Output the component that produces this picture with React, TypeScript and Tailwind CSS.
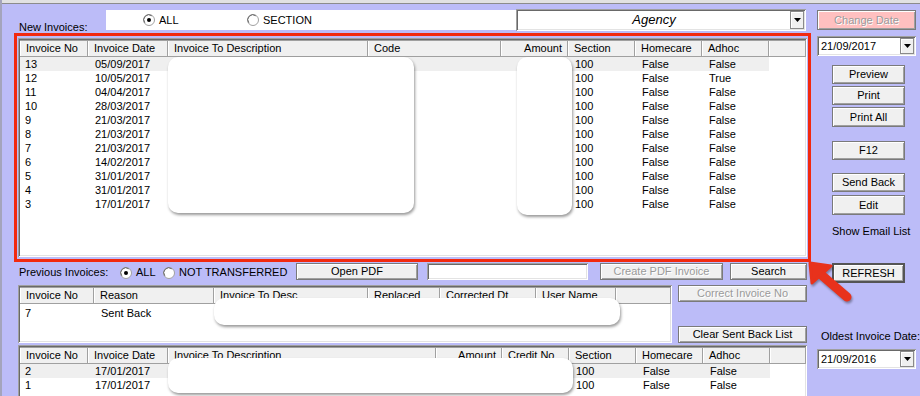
import React from "react";

type Col = { label: string; w: string; right?: boolean };

const sunken =
  "shadow-[inset_1px_1px_0_#a0a0a0,inset_-1px_-1px_0_#ffffff,inset_2px_2px_0_#696969,inset_-2px_-2px_0_#e3e3e3]";

const newCols: Col[] = [
  { label: "Invoice No", w: "w-[68px]" },
  { label: "Invoice Date", w: "w-[80px]" },
  { label: "Invoice To Description", w: "w-[200px]" },
  { label: "Code", w: "w-[133px]" },
  { label: "Amount", w: "w-[67px]", right: true },
  { label: "Section", w: "w-[67px]" },
  { label: "Homecare", w: "w-[67px]" },
  { label: "Adhoc", w: "w-[67px]" },
];

const sentCols: Col[] = [
  { label: "Invoice No", w: "w-[74px]" },
  { label: "Reason", w: "w-[120px]" },
  { label: "Invoice To Desc", w: "w-[154px]" },
  { label: "Replaced", w: "w-[72px]" },
  { label: "Corrected Dt", w: "w-[96px]" },
  { label: "User Name", w: "w-[80px]" },
];

const prevCols: Col[] = [
  { label: "Invoice No", w: "w-[68px]" },
  { label: "Invoice Date", w: "w-[80px]" },
  { label: "Invoice To Description", w: "w-[268px]" },
  { label: "Amount", w: "w-[66px]", right: true },
  { label: "Credit No", w: "w-[67px]" },
  { label: "Section", w: "w-[67px]" },
  { label: "Homecare", w: "w-[67px]" },
  { label: "Adhoc", w: "w-[67px]" },
];

const newRows = [
  ["13", "05/09/2017", "False"],
  ["12", "10/05/2017", "True"],
  ["11", "04/04/2017", "False"],
  ["10", "28/03/2017", "False"],
  ["9", "21/03/2017", "False"],
  ["8", "21/03/2017", "False"],
  ["7", "21/03/2017", "False"],
  ["6", "14/02/2017", "False"],
  ["5", "31/01/2017", "False"],
  ["4", "31/01/2017", "False"],
  ["3", "17/01/2017", "False"],
].map(([no, date, adhoc]) => [no, date, "", "", "", "100", "False", adhoc]);

const prevRows = [
  ["2", "17/01/2017", "", "", "", "100", "False", "False"],
  ["1", "17/01/2017", "", "", "", "100", "False", "False"],
];

function Btn({
  children,
  className = "",
  disabled = false,
  pink = false,
  main = false,
}: {
  children: React.ReactNode;
  className?: string;
  disabled?: boolean;
  pink?: boolean;
  main?: boolean;
}) {
  return (
    <div
      className={`flex flex-none items-center justify-center whitespace-nowrap leading-none shadow-[inset_1px_1px_0_#ffffff,inset_-1px_-1px_0_#a0a0a0] ${
        main ? "border-2 border-[#555555]" : "border border-[#7a7a7a]"
      } ${pink ? "bg-[#ffc0c0]" : "bg-[#f0f0f0]"} ${
        disabled ? "text-[#9a9a9a] [text-shadow:1px_1px_0_#ffffff]" : "text-black"
      } ${className}`}
    >
      {children}
    </div>
  );
}

function Radio({ label, checked = false, className = "" }: { label: string; checked?: boolean; className?: string }) {
  return (
    <div className={`flex flex-none items-center gap-[4px] leading-[13px] ${className}`}>
      <svg width="12" height="12" viewBox="0 0 12 12" className="flex-none">
        <circle cx="6" cy="6" r="5.5" fill="#ffffff" stroke="#a0a0a0" />
        <path d="M1.8 8.8 A5 5 0 0 1 8.8 1.8" fill="none" stroke="#696969" strokeWidth="1" />
        {checked && <circle cx="6" cy="6" r="2" fill="#000000" />}
      </svg>
      <span>{label}</span>
    </div>
  );
}

function DropBtn() {
  return (
    <div className="flex w-[14px] flex-none items-center justify-center border border-[#8a8a8a] bg-[#f0f0f0] shadow-[inset_1px_1px_0_#ffffff]">
      <svg width="7" height="4" viewBox="0 0 7 4">
        <path d="M0 0h7L3.5 4z" fill="#000000" />
      </svg>
    </div>
  );
}

function Combo({ value, className = "", center = false }: { value: string; className?: string; center?: boolean }) {
  return (
    <div className={`flex flex-none bg-white p-[2px] ${sunken} ${className}`}>
      <div
        className={`flex flex-1 items-center ${
          center ? "justify-center text-[13px] italic" : "pl-[2px] text-[11px]"
        }`}
      >
        {value}
      </div>
      <DropBtn />
    </div>
  );
}

function Grid({
  cols,
  rows,
  tail,
  className = "",
  rowClass = "h-[14px] leading-[14px]",
  hilite = true,
  children,
}: {
  cols: Col[];
  rows: string[][];
  tail: string;
  className?: string;
  rowClass?: string;
  hilite?: boolean;
  children?: React.ReactNode;
}) {
  return (
    <div className={`relative flex-none overflow-hidden bg-white p-[2px] ${sunken} ${className}`}>
      <div className="flex h-[17px]">
        {cols.map((c) => (
          <div
            key={c.label}
            className={`${c.w} flex-none truncate border-y border-r border-[#a0a0a0] bg-[#f0f0f0] leading-[15px] shadow-[inset_1px_0_0_#ffffff] ${
              c.right ? "pr-[5px] text-right" : "pl-[6px]"
            }`}
          >
            {c.label}
          </div>
        ))}
        <div className={`${tail} flex-none border-y border-r border-[#a0a0a0] bg-[#f0f0f0] shadow-[inset_1px_0_0_#ffffff]`} />
      </div>
      {rows.map((r, i) => (
        <div key={i} className={`flex w-fit ${rowClass} ${hilite && i === 0 ? "bg-[#efefef]" : ""}`}>
          {cols.map((c, j) => (
            <div
              key={j}
              className={`${c.w} flex-none truncate ${
                c.right ? "pr-[5px] text-right" : j === 0 ? "pl-[5px]" : "pl-[7px]"
              }`}
            >
              {r[j]}
            </div>
          ))}
        </div>
      ))}
      {children}
    </div>
  );
}

// white blur-out boxes laid over the grids
function Redact({ className }: { className: string }) {
  return <div className={`absolute rounded-[10px] bg-white shadow-[1px_2px_3px_rgba(0,0,0,0.4)] ${className}`} />;
}

function Arrow() {
  return (
    <svg
      width="920"
      height="396"
      className="pointer-events-none absolute left-0 top-0 drop-shadow-[1px_2px_1px_rgba(0,0,0,0.35)]"
    >
      <line x1="816" y1="272" x2="845" y2="297" stroke="#e8321c" strokeWidth="9" strokeLinecap="round" />
      <path d="M808 263 L810 283 L829 266 Z" fill="#e8321c" stroke="#e8321c" strokeWidth="3" strokeLinejoin="round" />
    </svg>
  );
}

export default function App() {
  return (
    <div className="relative h-[396px] w-[920px] overflow-hidden border-l-2 border-[#a4a4bc] bg-[#bcbcf8] font-['Liberation_Sans',Arial,sans-serif] text-[11px] text-black">
      <div className="h-[4px] border-b border-[#8c8c8c] bg-[#e2e2e2]" />
      <div className="flex">
        <div className="ml-[12px] w-[797px] flex-none">
          <div className="mt-[5px] flex h-[22px]">
            <div className="ml-[5px] w-[87px] flex-none pt-[12px] leading-[13px]">New Invoices:</div>
            <div className="mt-[1px] flex h-[20px] w-[410px] flex-none items-center bg-white pl-[37px]">
              <Radio checked label="ALL" className="w-[104px]" />
              <Radio label="SECTION" />
            </div>
            <Combo value="Agency" center className="h-[22px] w-[290px]" />
          </div>

          <div className="mt-[2px] h-[229px] border-[3px] border-[#f2290f] pl-[1px] pt-[2px]">
            <Grid cols={newCols} rows={newRows} tail="w-[37px]" className="h-[219px] w-[789px]">
              <Redact className="left-[150px] top-[19px] h-[156px] w-[246px]" />
              <Redact className="left-[499px] top-[19px] h-[158px] w-[55px]" />
            </Grid>
          </div>

          <div className="flex h-[20px] items-start">
            <div className="ml-[5px] mt-[4px] w-[101px] flex-none leading-[13px]">Previous Invoices:</div>
            <Radio checked label="ALL" className="mt-[4px] w-[43px]" />
            <Radio label="NOT TRANSFERRED" className="mt-[4px] w-[133px]" />
            <Btn className="mt-[1px] h-[17px] w-[122px]">Open PDF</Btn>
            <div className={`ml-[9px] mt-[1px] h-[17px] w-[161px] flex-none bg-white ${sunken}`} />
            <Btn disabled className="ml-[12px] mt-[1px] h-[17px] w-[123px]">
              Create PDF Invoice
            </Btn>
            <Btn className="ml-[7px] mt-[1px] h-[17px] w-[77px]">Search</Btn>
          </div>

          <div className="mt-[3px] flex h-[58px]">
            <Grid
              cols={sentCols}
              rows={[["7", "Sent Back"]]}
              tail="w-[55px]"
              hilite={false}
              rowClass="h-[18px] leading-[18px]"
              className="ml-[4px] h-[58px] w-[654px]"
            >
              <Redact className="left-[196px] top-[13px] h-[27px] w-[406px]" />
            </Grid>
            <div className="ml-[6px] flex w-[129px] flex-none flex-col justify-between">
              <Btn disabled className="h-[17px]">
                Correct Invoice No
              </Btn>
              <Btn className="h-[17px]">Clear Sent Back List</Btn>
            </div>
          </div>

          <Grid cols={prevCols} rows={prevRows} tail="w-[36px]" className="ml-[4px] mt-[2px] h-[60px] w-[789px]">
            <Redact className="left-[150px] top-[13px] h-[35px] w-[405px]" />
          </Grid>
        </div>

        <div className="ml-[6px] flex w-[99px] flex-none flex-col">
          <Btn pink disabled className="mt-[6px] h-[20px]">
            Change Date
          </Btn>
          <Combo value="21/09/2017" className="mt-[6px] h-[20px]" />
          <div className="ml-[15px] flex w-[73px] flex-col">
            <Btn className="mt-[9px] h-[19px]">Preview</Btn>
            <Btn className="mt-[2px] h-[19px]">Print</Btn>
            <Btn className="mt-[2px] h-[20px]">Print All</Btn>
            <Btn className="mt-[14px] h-[19px]">F12</Btn>
            <Btn className="mt-[13px] h-[19px]">Send Back</Btn>
            <Btn className="mt-[3px] h-[20px]">Edit</Btn>
            <div className="mt-[10px] whitespace-nowrap leading-[13px]">Show Email List</div>
            <Btn main className="mt-[25px] h-[20px]">
              REFRESH
            </Btn>
          </div>
          <div className="ml-[4px] mt-[47px] whitespace-nowrap leading-[13px]">Oldest Invoice Date:</div>
          <Combo value="21/09/2016" className="mt-[6px] h-[20px]" />
        </div>
      </div>
      <Arrow />
    </div>
  );
}
